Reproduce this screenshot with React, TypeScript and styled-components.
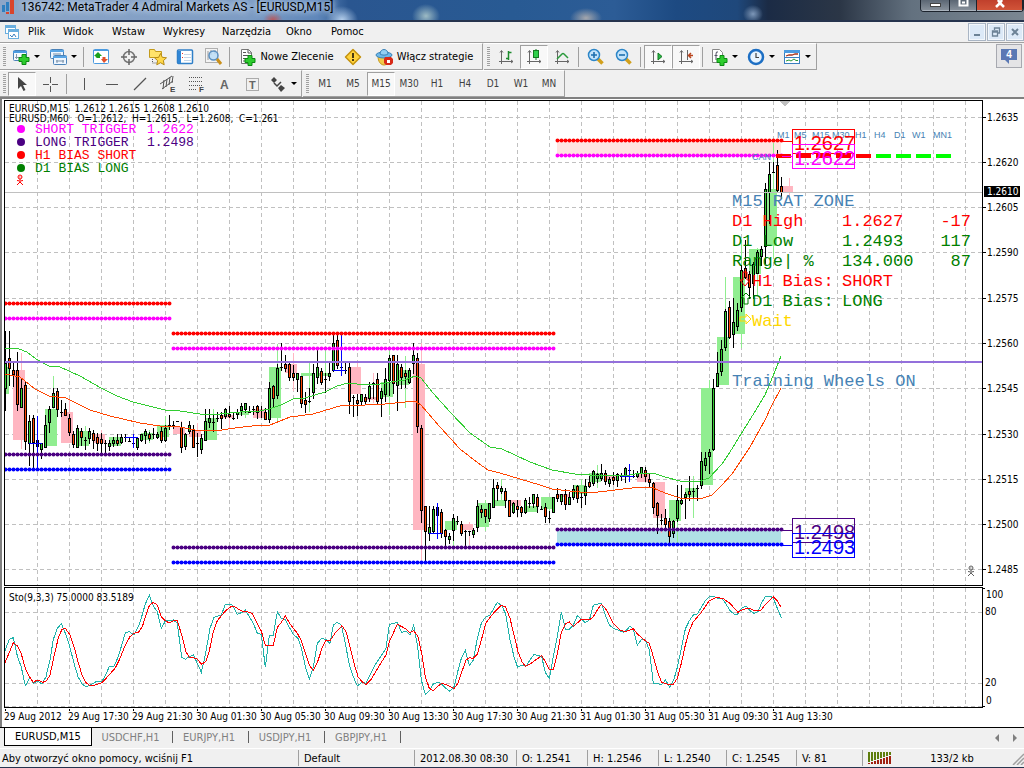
import React from "react";
import styled, { createGlobalStyle, css } from "styled-components";

const UI_FONT = '"DejaVu Sans Condensed", "Noto Sans", sans-serif';
const MONO = '"Liberation Mono", monospace';
const SANS = '"Liberation Sans", sans-serif';

const Global = createGlobalStyle`
  * { box-sizing: border-box; }
  body { margin: 0; background: #f0f0f0; font-family: ${UI_FONT}; font-size: 11px; color: #000; }
  button { font: inherit; color: inherit; padding: 0; margin: 0; background: none; border: 0; }
  svg { display: block; }
`;

/* ---------- window chrome ---------- */

const Window = styled.div`
  display: flex;
  flex-direction: column;
  min-height: 100vh;
  background: #f0f0f0;
`;

const TitleBar = styled.header`
  display: flex;
  justify-content: space-between;
  height: 22px;
  overflow: hidden;
  border-bottom: 2px solid #26344e;
  background:
    radial-gradient(ellipse 16px 14px at 342px 20px, #b5cfec, transparent),
    radial-gradient(ellipse 14px 12px at 426px 16px, #9dbbc4, transparent),
    radial-gradient(ellipse 16px 10px at 586px 18px, #a5a7ad, transparent),
    radial-gradient(ellipse 10px 8px at 273px 20px, #b8585c, transparent),
    radial-gradient(ellipse 10px 9px at 753px 14px, #7d97b8, transparent),
    linear-gradient(90deg, #8da6c8 0, #7d9cc4 24%, #5f87ba 31%, #2a5690 34%, #285a93 50%, #2c5c96 60%, #1d4a82 66%, #1f487b 72%, #1b2b45 75%, #2b3646 82%, #63717f 89%, #7b8792 100%);
`;

const Caption = styled.div`
  display: flex;
  gap: 5px;
  align-items: flex-start;
  padding-left: 1px;
  white-space: nowrap;
`;

const CaptionText = styled.h1`
  margin: 0;
  font-family: Roboto, "Noto Sans", sans-serif;
  font-size: 12px;
  font-weight: 400;
  line-height: 14px;
  text-shadow: 0 0 6px #dce8f6, 0 0 6px #b9cde6;
`;

const CaptionButtons = styled.div`
  display: flex;
  height: 12px;
  border: 1px solid #1c232d;
  border-top: 0;
  border-radius: 0 0 4px 4px;
  overflow: hidden;
`;

const CaptionButton = styled.button<{ $w: number; $close?: boolean }>`
  display: flex;
  justify-content: center;
  width: ${(p) => p.$w}px;
  border-right: 1px solid #1c232d;
  box-shadow: inset 0 -1px 0 #aab3bd;
  background: ${(p) => (p.$close ? "linear-gradient(#c0402c, #d3563a)" : "linear-gradient(#5b6673, #8a939d)")};
`;

const MenuBar = styled.nav`
  display: flex;
  align-items: center;
  height: 21px;
  padding-left: 4px;
  border-bottom: 1px solid #a0a0a0;
`;

const MenuItem = styled.button<{ $w: number }>`
  width: ${(p) => p.$w}px;
  text-align: left;
  font-size: 11px;
  line-height: 16px;
`;

const MdiButtons = styled.div`
  display: flex;
  gap: 1px;
  margin-left: auto;
`;

const MdiButton = styled.button`
  display: grid;
  place-items: center;
  width: 18px;
  height: 18px;
  border: 1px solid #a9b5c4;
  background: #dce9f7;
  box-shadow: inset 0 0 0 1px #f2f7fc;
`;

/* ---------- tool bars ---------- */

const Row = styled.div`
  display: flex;
  justify-content: space-between;
  height: 27px;
`;

const Groups = styled.div`
  display: flex;
  gap: 1px;
`;

const Group = styled.div`
  display: flex;
  align-items: center;
  padding: 0 1px 0 3px;
  border-top: 1px solid #fff;
  border-right: 1px solid #a0a0a0;
  border-bottom: 1px solid #a0a0a0;
`;

const Grip = styled.span`
  width: 3px;
  height: 19px;
  margin-right: 2px;
  background: repeating-linear-gradient(#a0a0a0 0 1px, #f0f0f0 1px 2px);
`;

const Divider = styled.span`
  width: 1px;
  height: 20px;
  margin: 0 3px 0 2px;
  background: #a0a0a0;
`;

const Tool = styled.button<{ $w?: number; $pressed?: boolean }>`
  display: flex;
  align-items: center;
  justify-content: center;
  gap: 4px;
  width: ${(p) => p.$w ?? 28}px;
  height: 24px;
  font-size: 11px;
  white-space: nowrap;
  ${(p) =>
    p.$pressed &&
    css`
      border: 1px solid #a0a0a0;
      border-right-color: #fff;
      border-bottom-color: #fff;
      background: #f8f8f8;
    `}
`;

const Period = styled(Tool)`
  color: #404040;
  font-size: 10px;
`;

const Drop = styled.span`
  border: 3px solid transparent;
  border-top-color: #000;
  border-bottom-width: 0;
`;

const ChatButton = styled.button`
  display: grid;
  place-items: center;
  width: 26px;
  height: 24px;
  margin: 1px 2px 0 0;
  border: 1px solid #a7a9b0;
  background: #e4e4e6;
`;

/* ---------- chart ---------- */

const ChartWindow = styled.main`
  display: grid;
  grid-template-columns: minmax(0, 1fr) 41px;
  row-gap: 1px;
  flex: 1;
  align-content: start;
  padding: 1px 0 0 2px;
  border-top: 2px solid #808080;
  border-left: 2px solid #808080;
  background: #fff;
`;

const Plot = styled.section<{ $h: number }>`
  height: ${(p) => p.$h}px;
  border: 1px solid #000;
`;

const Scale = styled.div<{ $h: number }>`
  height: ${(p) => p.$h}px;
`;

const Drawing = styled.svg`
  width: 100%;
  height: 100%;
  overflow: hidden;
  shape-rendering: crispEdges;
`;

const Label = styled.text<{ $size?: number; $font?: string }>`
  font-family: ${(p) => p.$font ?? UI_FONT};
  font-size: ${(p) => p.$size ?? 10}px;
  white-space: pre;
`;

const TimeAxis = styled.div`
  grid-column: 1 / -1;
  height: 18px;
`;

/* ---------- tabs and status ---------- */

const Tabs = styled.nav`
  display: flex;
  height: 21px;
  padding-left: 4px;
  border-top: 1px solid #000;
`;

const Tab = styled.button<{ $w: number; $active?: boolean }>`
  width: ${(p) => p.$w}px;
  height: 18px;
  color: #808080;
  position: relative;
  ${(p) =>
    p.$active
      ? css`
          color: #000;
          background: #fff;
          border: 1px solid #000;
          border-top: 0;
        `
      : css`
          padding-right: 4px;
          &::after {
            content: "";
            position: absolute;
            right: 0;
            top: 3px;
            height: 12px;
            border-right: 1px solid #606060;
          }
        `}
`;

const TabArrows = styled.div`
  display: flex;
  gap: 6px;
  margin: 4px 4px 0 auto;
`;

const ArrowButton = styled.button`
  width: 11px;
  height: 11px;
`;

const Status = styled.footer`
  display: flex;
  align-items: center;
  height: 20px;
  border-top: 1px solid #fff;
  border-bottom: 1px solid #26344e;
`;

const Cell = styled.span<{ $w?: number }>`
  flex: ${(p) => (p.$w ? `0 0 ${p.$w}px` : "1 1 auto")};
  display: flex;
  align-items: center;
  height: 16px;
  padding-left: 5px;
  border-left: 1px solid #a0a0a0;
  white-space: nowrap;
  &:first-child { border-left: 0; padding-left: 2px; }
`;

const Traffic = styled.span`
  flex: 1;
  text-align: center;
`;

/* ---------- icons ---------- */

const Icon = ({ children, s = 18 }: { children: React.ReactNode; s?: number }) => (
  <svg width={s} height={s} viewBox={`0 0 ${s} ${s}`} aria-hidden="true">{children}</svg>
);

const Plus = ({ x, y }: { x: number; y: number }) => (
  <path d={`M${x + 3} ${y}h4v3h3v4h-3v3h-4v-3h-3v-4h3z`} fill="#2ecc2e" stroke="#0b8a12" />
);

const icons = {
  newChart: (
    <Icon><rect x="1.500" y="2.500" width="13" height="10" rx="1" fill="#f4f9ff" stroke="#4b82b8" /><path d="M1 3h14v2H1z" fill="#4b9be0" /><path d="M4.500 6v5M3 9.500h5M10 7h3" stroke="#8896a8" fill="none" /><Plus x={7} y={6.500} /></Icon>
  ),
  profiles: (
    <Icon><rect x="1.500" y="1.500" width="13" height="9" rx="1" fill="#eef6ff" stroke="#4b82b8" /><path d="M1 2h14v2H1z" fill="#5aa6e6" /><rect x="4.500" y="7.500" width="13" height="9" rx="1" fill="#eef6ff" stroke="#4b82b8" /><path d="M4 8h14v2H4z" fill="#5aa6e6" /><path d="M7 13h8M8 12v3M14 12v3M4 6h8" stroke="#7890a8" fill="none" /></Icon>
  ),
  market: (
    <Icon><rect x="1.500" y="1.500" width="15" height="14" rx="1" fill="#fff" stroke="#4b9be0" /><path d="M1 2h16v1H1z" fill="#4b9be0" /><path d="M3.500 9V8H2L6 4l4 4H8v2H5z" fill="#1aa01a" /><path d="M9 11h1.500V9h3v2H16l-4 4z" fill="#e2502a" /></Icon>
  ),
  crosshair: (
    <Icon><circle cx="9" cy="9" r="5.500" fill="none" stroke="#777" strokeWidth="1.500" /><path d="M9 1v6M9 11v6M1 9h6M11 9h6" stroke="#666" strokeWidth="1.500" /></Icon>
  ),
  star: (
    <Icon s={19}><path d="M1.500 2.500h5l1 2h6v6h-12z" fill="#ffe36b" stroke="#c39b1c" /><path d="M4.500 12v4h5" stroke="#555" strokeDasharray="1 1" fill="none" /><path d="M12.500 6.500l1.800 3.800 4.200.5-3.100 2.800.8 4.200-3.700-2.100-3.700 2.100.8-4.200-3.100-2.800 4.200-.5z" fill="#ffd84a" stroke="#b58a14" /></Icon>
  ),
  navigator: (
    <Icon><rect x="1.500" y="2" width="15" height="13.500" rx="1" fill="#fff" stroke="#2f7fc8" strokeWidth="1.500" /><path d="M2 3h3v12H2z" fill="#2f86d6" /><path d="M8 6.500h7M8 9.500h7M8 12.500h7" stroke="#c4d6e8" /><path d="M6 5h1v1H6zM6 9h1v1H6z" fill="#d33" /></Icon>
  ),
  tester: (
    <Icon s={19}><rect x="1.500" y="1.500" width="12" height="14" fill="#f4f4f4" stroke="#b0b0b0" /><path d="M4 4v9M7 3v5M11 3v4" stroke="#9a9a9a" /><circle cx="9.500" cy="8.500" r="4.500" fill="#b8dcf8" fillOpacity=".8" stroke="#5a8fc0" strokeWidth="1.500" /><path d="M13 12l4 5" stroke="#c98f1a" strokeWidth="3" /></Icon>
  ),
  order: (
    <Icon><path d="M3.500 1.500h7l3 3v11h-10z" fill="#fff" stroke="#777" /><path d="M10 1.500V5h3.500M5 4.500h3M5 7.500h6M5 10.500h3M5 13h3" stroke="#555" fill="none" /><Plus x={7} y={7.500} /></Icon>
  ),
  alert: (
    <Icon><path d="M9 1.500L16.500 9 9 16.500 1.500 9z" fill="#ffd23c" stroke="#c4920e" strokeLinejoin="round" strokeWidth="1.500" /><path d="M8 5h2v5H8zM8 11h2v2H8z" fill="#4a3a10" /></Icon>
  ),
  expert: (
    <Icon><path d="M3 8c0 6 3 9 6 9s6-3 6-9z" fill="#f2c94a" stroke="#c49a20" /><ellipse cx="9" cy="7" rx="8" ry="3" fill="#6db9ea" stroke="#3a82b8" /><path d="M5 6c0-6 8-6 8 0-2 1.500-6 1.500-8 0z" fill="#93d0f4" stroke="#3a82b8" /><path d="M10 9h6l2 2v4l-2 2h-5l-2-2v-4z" fill="#d82a18" /><path d="M12 12h3v3h-3z" fill="#fff" /></Icon>
  ),
  bars: (
    <Icon><path d="M4.500 3v13M2 13.500h14M3 4.500l1.500-2L6 4.500M14 12l2 1.500-2 1.500" stroke="#666" fill="none" /><path d="M11.500 3v9M11.500 4.500h3M9 10.500h2.500" stroke="#1c8a2c" strokeWidth="1.500" fill="none" /></Icon>
  ),
  candle: (
    <Icon><path d="M4.500 3v13M2 13.500h14M3 4.500l1.500-2L6 4.500M14 12l2 1.500-2 1.500" stroke="#666" fill="none" /><path d="M11 1v11" stroke="#137a20" /><rect x="8.500" y="2.500" width="5" height="7" fill="#2ed04a" stroke="#137a20" /></Icon>
  ),
  line: (
    <Icon><path d="M4.500 3v13M2 13.500h14M3 4.500l1.500-2L6 4.500M14 12l2 1.500-2 1.500" stroke="#666" fill="none" /><path d="M4 11l5-5q1-1 2 0l4 4" stroke="#2a9a3c" strokeWidth="1.500" fill="none" /></Icon>
  ),
  zoomIn: (
    <Icon><path d="M10.500 10.500l5 5" stroke="#d2a01c" strokeWidth="3.500" /><circle cx="7" cy="7" r="5.500" fill="#c4e4fa" stroke="#2c86c8" strokeWidth="1.500" /><path d="M7 4v6M4 7h6" stroke="#1d6fae" strokeWidth="1.600" /></Icon>
  ),
  zoomOut: (
    <Icon><path d="M10.500 10.500l5 5" stroke="#d2a01c" strokeWidth="3.500" /><circle cx="7" cy="7" r="5.500" fill="#c4e4fa" stroke="#2c86c8" strokeWidth="1.500" /><path d="M4 7h6" stroke="#1d6fae" strokeWidth="1.600" /></Icon>
  ),
  scroll: (
    <Icon><path d="M4.500 3v13M2 13.500h14M3 4.500l1.500-2L6 4.500M14 12l2 1.500-2 1.500" stroke="#666" fill="none" /><path d="M9 5l4 3.500L9 12z" fill="#2ab84a" stroke="#137a20" /></Icon>
  ),
  shift: (
    <Icon><path d="M4.500 3v13M2 13.500h14M3 4.500l1.500-2L6 4.500M14 12l2 1.500-2 1.500M10.500 2v10" stroke="#666" fill="none" /><path d="M16 7.500h-4M14 5l-2.500 2.500L14 10" stroke="#b8431c" strokeWidth="1.500" fill="none" /></Icon>
  ),
  indicators: (
    <Icon><path d="M2.500 1.500h7l3 3v10h-10z" fill="#fff" stroke="#888" /><path d="M8 4q-2-1-2 2v6M4.500 7.500h3" stroke="#556" fill="none" /><Plus x={7} y={7.500} /></Icon>
  ),
  clock: (
    <Icon><circle cx="9" cy="9" r="7" fill="#e8f4ff" stroke="#1d6fc4" strokeWidth="2.500" /><path d="M9 5v4.500h3" stroke="#444" fill="none" strokeWidth="1.200" /></Icon>
  ),
  template: (
    <Icon><rect x="1.500" y="2.500" width="15" height="13" fill="#fff" stroke="#3a7fc0" /><path d="M1 2h16v3H1z" fill="#4b9be0" /><path d="M3 8l3-1h3l3-1h3" stroke="#a8331c" strokeWidth="1.300" fill="none" /><path d="M3 13l3-1 2 1 3-2 2 1.500h2" stroke="#2a9a3c" fill="none" /><path d="M2 9.500h14" stroke="#3a7fc0" /></Icon>
  ),
  pointer: (<Icon><path d="M5 2v12l3-3 2.500 5 2-1-2.500-5h4z" fill="#444" /></Icon>),
  cross: (<Icon><path d="M9.500 2v6M9.500 11v6M2 9.500h6M11 9.500h6" stroke="#555" /></Icon>),
  vline: (<Icon><path d="M9.500 3v12" stroke="#555" /></Icon>),
  hline: (<Icon><path d="M3 9.500h12" stroke="#555" /></Icon>),
  trend: (<Icon><path d="M3 15L15 3" stroke="#555" strokeWidth="1.200" /></Icon>),
  channel: (
    <Icon><path d="M1 9L13 1M3 14L14 6M5 5l-1 9M8 4L7 12M11 2l-1 8M14 1l-1 7" stroke="#555" fill="none" /><text x="11" y="17" fontFamily="Liberation Sans" fontWeight="700" fontSize="8" fill="#444">E</text></Icon>
  ),
  fibo: (
    <Icon><path d="M2 2.500h14M2 6.500h14M2 10.500h14M2 14.500h8" stroke="#555" strokeDasharray="1 1" /><text x="12" y="17" fontFamily="Liberation Sans" fontWeight="700" fontSize="8" fill="#444">F</text></Icon>
  ),
  text: (<Icon><text x="5" y="14" fontFamily="Liberation Sans" fontWeight="700" fontSize="12" fill="#666">A</text></Icon>),
  label: (
    <Icon><rect x="3.500" y="3.500" width="12" height="12" fill="none" stroke="#666" strokeDasharray="1 1" /><text x="6" y="14" fontFamily="Liberation Sans" fontWeight="700" fontSize="11" fill="#666">T</text></Icon>
  ),
  arrows: (
    <Icon><path d="M5 2l3 3-3 3-3-3zM12 10l4 3-4 4-3-4z" fill="#444" /><path d="M5 8l3 3 4-4" fill="none" stroke="#444" strokeWidth="1.500" /></Icon>
  ),
};

/* ---------- chart data (canvas coordinates) ---------- */

// Candles four pixels apart from x = 5: high, low, body top, body bottom, direction.
const CANDLES = `331 410 363 388 G|331 385 358 368 R|362 386 370 374 R|352 410 370 404 R|378 407 388 407 G|382 449 385 441 R|415 465 421 443 G|415 468 418 442 R|440 446 440 446 R|443 458 443 449 G|415 447 425 447 G|406 432 409 422 G|388 407 393 407 G|388 416 391 409 R|400 416 412 412 G|403 415 409 415 R|414 435 418 432 R|431 447 434 444 R|425 447 428 447 G|428 445 431 437 R|437 449 440 440 G|428 443 431 438 G|430 448 433 440 R|433 450 437 443 R|433 453 439 443 R|440 455 443 443 G|440 450 443 446 G|437 446 440 443 G|434 445 440 443 R|434 443 437 442 G|434 441 437 437 G|438 441 441 441 G|443 443 443 443 G|437 449 438 447 G|434 441 434 440 G|429 443 431 435 G|432 440 434 438 R|428 438 434 434 G|432 438 434 437 G|427 442 431 440 R|425 441 428 440 G|415 429 425 425 G|421 428 425 425 G|421 421 421 421 G|422 452 427 447 R|433 449 434 446 G|421 433 425 431 G|425 447 430 447 R|433 456 443 443 G|434 453 438 449 G|409 440 421 440 G|409 427 418 422 G|414 431 422 422 G|412 421 418 418 G|412 428 415 418 R|408 418 409 416 G|406 417 414 416 R|412 419 418 418 G|409 418 412 414 G|403 415 406 410 G|403 412 403 409 G|406 412 412 412 G|406 414 409 409 G|405 418 406 412 R|406 417 410 410 R|408 419 412 419 R|382 422 388 419 G|385 407 386 398 R|364 398 368 395 G|343 370 367 367 G|355 371 364 368 R|362 380 364 377 R|365 380 373 377 R|373 391 373 379 G|376 407 376 403 R|392 412 400 404 R|388 402 401 401 G|364 398 373 392 G|350 383 367 377 G|368 384 371 382 R|373 392 379 379 G|362 380 373 376 G|335 371 343 370 G|335 368 340 365 R|367 367 367 367 G|363 373 370 370 G|363 413 367 401 R|395 416 397 397 G|394 415 400 403 R|394 405 394 401 G|394 403 397 401 R|382 401 386 398 G|382 398 383 383 G|373 403 379 401 R|388 416 391 398 G|368 401 379 394 G|355 395 358 380 G|355 393 355 383 R|355 410 364 385 G|364 388 367 377 R|370 387 373 376 R|368 383 370 382 G|343 373 355 363 G|353 432 358 426 R|425 522 428 510 R|506 561 506 531 R|506 540 527 533 G|506 533 509 531 G|507 515 507 515 R|509 537 512 533 R|529 547 530 536 R|533 543 536 539 G|514 540 518 530 G|516 524 521 521 G|521 535 524 533 R|530 547 531 531 G|531 535 531 531 G|528 537 530 534 G|500 531 506 527 G|505 517 509 512 R|509 522 509 516 R|503 521 503 518 G|479 507 488 507 G|482 500 485 488 R|486 493 488 491 G|488 507 491 500 R|500 516 500 516 R|502 513 503 512 G|500 516 506 509 R|506 516 507 512 R|498 513 500 512 G|497 507 503 503 G|494 507 494 503 G|494 512 497 506 R|506 509 509 509 G|503 522 507 516 R|511 522 518 518 G|497 512 497 512 G|488 501 494 498 R|494 504 494 501 G|489 509 494 504 R|492 504 497 504 G|485 499 489 497 G|485 502 486 498 R|493 507 497 497 G|479 504 486 495 G|476 487 482 486 R|470 485 471 483 G|473 482 474 478 G|464 480 473 478 G|470 484 473 481 R|477 486 479 483 G|472 484 477 480 R|473 486 474 480 G|473 480 476 476 G|467 482 468 476 G|470 470 470 470 G|470 477 476 476 G|471 477 473 476 G|467 477 467 473 G|467 481 470 476 R|474 486 479 482 R|482 513 483 507 R|502 533 503 515 R|514 524 520 520 G|509 529 518 524 R|518 543 521 536 R|520 537 521 533 G|485 521 500 518 G|485 504 500 503 G|492 518 494 497 G|476 500 491 494 R|488 497 491 491 G|485 500 488 488 G|452 488 461 485 G|452 470 458 465 G|449 473 452 456 G|379 450 388 449 G|352 386 373 386 G|340 375 349 371 G|309 350 311 347 G|301 338 307 337 R|298 347 322 334 G|303 330 310 326 G|265 311 270 307 G|240 278 268 277 R|271 298 274 287 R|262 298 264 283 G|250 273 252 273 G|246 265 249 256 G|183 263 189 246 G|162 223 174 192 G|162 172 172 172 G|150 192 165 190 R|177 198 186 192 R`
  .split("|")
  .map((row, i) => {
    const [high, low, top, bottom, dir] = row.split(" ");
    return { x: 5 + i * 4, high: +high, low: +low, top: +top, bottom: +bottom, up: dir === "G" };
  });

// Hourly candles drawn behind: left, body top, body bottom, high, low, direction.
const HOURS: [number, number, number, number, number, "G" | "R" | "B"][] = [
  [-3, 367, 394, 367, 394, "G"], [13, 370, 440, 353, 449, "R"], [29, 443, 443, 416, 470, "B"], [45, 409, 446, 376, 446, "G"],
  [61, 412, 443, 400, 443, "R"], [77, 431, 446, 426, 448, "G"], [93, 434, 443, 430, 453, "R"], [109, 437, 446, 434, 446, "G"],
  [125, 437, 437, 434, 448, "B"], [141, 433, 440, 430, 443, "G"], [157, 425, 437, 416, 440, "G"], [173, 427, 434, 421, 452, "R"],
  [189, 431, 437, 423, 453, "R"], [205, 418, 440, 409, 440, "G"], [221, 415, 418, 406, 428, "R"], [237, 412, 415, 403, 418, "G"],
  [253, 409, 418, 406, 418, "R"], [269, 367, 418, 344, 421, "G"], [285, 364, 373, 353, 391, "R"], [301, 373, 376, 363, 412, "G"],
  [317, 373, 376, 348, 392, "G"], [333, 370, 370, 335, 376, "B"], [349, 367, 394, 363, 415, "R"], [365, 397, 400, 373, 403, "R"],
  [381, 382, 397, 350, 415, "G"], [397, 370, 385, 356, 408, "G"], [413, 364, 530, 343, 563, "R"], [429, 533, 533, 503, 539, "B"],
  [445, 521, 530, 516, 547, "G"], [461, 524, 530, 522, 545, "R"], [477, 503, 527, 500, 531, "G"], [493, 500, 506, 479, 506, "G"],
  [509, 500, 506, 500, 515, "R"], [525, 506, 512, 497, 512, "G"], [541, 497, 509, 497, 521, "G"], [557, 494, 497, 489, 508, "R"],
  [573, 485, 494, 479, 506, "G"], [589, 473, 482, 465, 488, "G"], [605, 476, 479, 472, 486, "R"], [621, 476, 476, 464, 482, "B"],
  [637, 473, 482, 467, 482, "R"], [653, 482, 518, 482, 533, "R"], [669, 500, 521, 486, 545, "G"], [685, 488, 497, 476, 518, "G"],
  [701, 388, 485, 380, 485, "G"], [717, 337, 385, 277, 385, "G"], [733, 277, 334, 240, 348, "G"], [749, 249, 274, 248, 296, "G"],
  [765, 189, 246, 143, 258, "G"], [781, 186, 192, 178, 198, "R"],
];

const FAST_MA =
  "5,348 19,349 27,352 36,359 49,366 60,367 80,376 101,388 117,396 133,402 149,406 165,410 180,411 200,414 220,414 240,412 260,411 269,409 281,405 293,399 305,398 325,392 337,386 348,383 365,385 380,384 397,381 405,380 415,376 421,378 433,393 450,412 470,433 490,447 502,449 515,455 530,462 552,470 575,474 590,475 630,475 640,473 653,473 665,477 680,481 700,481 709,478 722,464 730,452 741,434 751,418 765,395 773,376 781,356";
const SLOW_MA =
  "5,374 20,377 35,389 49,396 66,398 90,410 110,416 140,423 160,426 180,427 195,430 215,431 235,428 260,425 270,425 290,417 313,414 343,405 365,405 385,404 405,402 415,401 421,405 440,427 460,449 478,463 488,470 500,473 520,479 540,485 552,489 570,491 590,493 615,490 640,487 653,488 665,493 680,498 700,499 712,495 722,485 732,474 750,447 765,420 772,405 781,388";

// Oscillator samples, three units to the pixel.
const STO_MAIN =
  "15,212 28,178 40,173 52,228 64,262 76,317 90,292 100,310 112,303 126,312 138,290 150,240 160,178 172,145 184,131 196,160 208,195 222,250 234,290 246,312 258,320 272,315 290,304 305,306 318,282 328,260 342,258 355,230 376,158 388,155 402,165 415,140 425,110 436,72 448,46 460,78 472,95 484,145 496,123 520,120 532,130 545,232 556,238 568,230 580,224 592,250 604,277 616,225 630,145 642,112 664,105 676,73 696,74 712,103 726,97 736,90 748,110 760,130 772,160 784,163 796,262 808,165 820,165 832,95 844,115 856,118 868,142 880,163 894,175 904,203 916,260 928,298 940,262 952,190 964,176 978,178 990,190 1000,135 1012,127 1024,135 1036,190 1048,255 1060,290 1072,318 1086,307 1098,310 1110,285 1125,255 1150,218 1158,205 1168,133 1192,127 1205,158 1218,153 1230,165 1241,136 1253,200 1264,300 1276,343 1288,333 1300,312 1315,306 1325,312 1338,325 1350,334 1362,320 1374,272 1384,235 1396,212 1408,256 1420,240 1432,175 1444,130 1456,112 1470,105 1492,67 1506,78 1517,102 1530,180 1542,230 1553,262 1566,255 1580,256 1590,240 1602,223 1625,230 1636,278 1648,295 1660,230 1672,170 1684,95 1696,147 1708,147 1720,135 1732,107 1744,118 1756,128 1768,120 1780,76 1790,73 1804,70 1816,105 1828,135 1840,145 1855,150 1870,157 1880,150 1890,138 1900,147 1912,195 1925,178 1936,180 1948,210 1960,310 1985,313 1997,300 2009,322 2022,297 2032,262 2044,205 2056,147 2068,122 2080,105 2092,102 2104,82 2116,62 2128,50 2140,48 2154,55 2166,55 2178,72 2190,92 2202,102 2212,104 2224,85 2238,78 2250,92 2262,100 2274,95 2284,70 2296,50 2310,48 2320,55 2330,80 2344,113";
const STO_SIGNAL =
  "15,248 40,188 52,198 64,222 76,265 88,290 100,307 112,300 128,307 140,302 150,285 164,220 176,170 186,148 196,145 210,165 222,200 234,245 246,285 258,308 270,317 284,315 305,308 318,295 345,265 358,240 376,195 390,170 402,160 415,157 427,140 438,105 448,77 460,67 472,75 484,110 496,122 508,129 520,122 532,122 545,165 558,215 568,232 590,235 605,253 618,243 628,212 640,155 652,122 676,93 696,78 708,82 722,92 748,97 758,102 772,132 784,153 796,196 820,196 832,142 844,127 856,108 870,132 892,160 904,182 916,220 928,255 940,272 952,248 966,205 978,180 990,182 1005,160 1026,137 1038,155 1050,200 1062,250 1074,290 1086,305 1098,314 1112,300 1136,260 1158,225 1168,185 1192,133 1215,145 1230,158 1241,152 1254,170 1266,225 1276,290 1288,325 1300,332 1312,320 1325,310 1340,315 1362,326 1374,310 1384,280 1398,240 1408,233 1420,235 1432,222 1444,180 1458,128 1480,100 1504,76 1516,80 1530,115 1554,215 1566,245 1576,259 1590,252 1604,242 1625,227 1636,245 1648,268 1660,268 1672,220 1684,158 1696,132 1708,126 1720,140 1744,118 1768,120 1780,110 1792,90 1804,73 1818,88 1840,130 1860,150 1875,155 1890,150 1900,146 1912,162 1936,182 1948,190 1960,230 1974,280 1985,307 2000,312 2020,313 2032,295 2044,250 2056,195 2068,152 2080,125 2104,97 2128,62 2148,52 2170,56 2190,70 2214,97 2230,88 2248,84 2265,93 2282,92 2295,75 2320,50 2332,62 2342,80";

const thirds = (points: string) =>
  points
    .split(" ")
    .map((p) => {
      const [x, y] = p.split(",").map(Number);
      return `${x / 3},${580 + y / 3}`;
    })
    .join(" ");

const PRICES = ["1.2635", "1.2620", "1.2605", "1.2590", "1.2575", "1.2560", "1.2545", "1.2530", "1.2515", "1.2500", "1.2485"];
const PRICE_Y = [117, 162, 207, 252, 298, 343, 388, 434, 479, 524, 569];
const TIMES = ["29 Aug 2012", "29 Aug 17:30", "29 Aug 21:30", "30 Aug 01:30", "30 Aug 05:30", "30 Aug 09:30", "30 Aug 13:30", "30 Aug 17:30", "30 Aug 21:30", "31 Aug 01:30", "31 Aug 05:30", "31 Aug 09:30", "31 Aug 13:30"];

const LEVELS: [number, number, number, string][] = [
  [5, 171, 303, "#ff0000"], [5, 171, 318, "#ff00ff"], [5, 171, 454, "#4b0082"], [5, 171, 469, "#0000ff"],
  [173, 554, 333, "#ff0000"], [173, 554, 348, "#ff00ff"], [173, 554, 547, "#4b0082"], [173, 554, 562, "#0000ff"],
  [557, 782, 140, "#ff0000"], [557, 782, 155, "#ff00ff"], [557, 782, 529, "#4b0082"], [557, 782, 544, "#0000ff"],
];

const TAGS: [number, string, string][] = [
  [129, "1.2627", "#ff0000"], [144, "1.2622", "#ff00ff"], [518, "1.2498", "#4b0082"], [533, "1.2493", "#0000ff"],
];

const FRAMES: [string, number, number][] = [
  ["M1", 777, 776], ["M5", 794, 796], ["M15", 812, 816], ["M30", 832, 836], ["H1", 855, 856], ["H4", 874, 876], ["D1", 894, 896], ["W1", 912, 916], ["MN1", 933, 936],
];

const PANEL: [number, number, string, string][] = [
  [732, 206, "#4682b4", "M15 RAT ZONE"],
  [732, 226, "#ff0000", "D1 High"], [842, 226, "#ff0000", "1.2627"],
  [732, 246, "#008000", "D1 Low"], [842, 246, "#008000", "1.2493"],
  [732, 266, "#008000", "Range| %"], [842, 266, "#008000", "134.000"],
  [752, 286, "#ff0000", "H1 Bias:"], [842, 286, "#ff0000", "SHORT"],
  [752, 306, "#008000", "D1 Bias:"], [842, 306, "#008000", "LONG"],
  [752, 326, "#ffd700", "Wait"],
  [732, 386, "#4682b4", "Training Wheels ON"],
];

const LEGEND: [number, string, string, string][] = [
  [129, "#ff00ff", "SHORT TRIGGER", "1.2622"],
  [142, "#4b0082", "LONG TRIGGER", "1.2498"],
  [155, "#ff0000", "H1 BIAS SHORT", ""],
  [168, "#008000", "D1 BIAS LONG", ""],
];

const Columns = ({ top, bottom }: { top: number; bottom: number }) => (
  <g stroke="#c0c0c0" strokeDasharray="4 3">
    {Array.from({ length: 60 }, (_, i) => (
      <path key={i} d={`M${37.5 + i * 32} ${top}V${bottom}`} />
    ))}
  </g>
);

const Skull = ({ x, y, color }: { x: number; y: number; color: string }) => (
  <g transform={`translate(${x} ${y})`} shapeRendering="auto" stroke={color} fill="none">
    <circle cx="4" cy="3" r="2" />
    <path d="M3 3h.8M4.600 3h.8M4 5v1M1 6.500q3 1 6 0M4 7v1M1 11l3-3 3 3" />
  </g>
);

const PriceChart = () => (
  <Drawing role="img" aria-label="EURUSD M15 price chart">
    <g transform="translate(-5 -101)">
      <Columns top={101} bottom={590} />
      <g stroke="#c0c0c0" strokeDasharray="4 3">
        {PRICE_Y.map((y) => <path key={y} d={`M5 ${y + 0.5}H3000`} />)}
      </g>
      <path d="M779 101h12l-6 5z" fill="#c0c0c0" />
      <rect x="557" y="141" width="224" height="15" fill="#ffe4e1" />
      <rect x="557" y="530" width="224" height="14" fill="#b0e0e6" />
      {HOURS.map(([x, top, bottom, high, low, dir]) =>
        dir === "B" ? null : (
          <g key={x} fill={dir === "G" ? "#90ee90" : "#ffb6c1"}>
            <rect x={x + 8} y={high} width="1" height={low - high} />
            <rect x={x} y={top} width="12" height={bottom - top} />
          </g>
        ),
      )}
      {CANDLES.map((c) => (
        <g key={c.x}>
          <rect x={c.x} y={c.high} width="1" height={c.low - c.high + 1} />
          <rect x={c.x - 1} y={c.top} width="3" height={c.bottom - c.top + 1} />
          {c.bottom - c.top > 1 && (
            <rect x={c.x} y={c.top + 1} width="1" height={c.bottom - c.top - 1} fill={c.up ? "#32cd32" : "#ff4500"} />
          )}
        </g>
      ))}
      {HOURS.filter((h) => h[5] === "B").map(([x, y, , high, low]) => (
        <path key={x} d={`M${x} ${y + 0.5}h13M${x + 8.5} ${high}V${low}`} stroke="#0000ff" />
      ))}
      <path d="M5 192.500H3000" stroke="#c0c0c0" />
      <polyline points={FAST_MA} fill="none" stroke="#32cd32" />
      <polyline points={SLOW_MA} fill="none" stroke="#ff4500" />
      <path d="M5 362H3000" stroke="#9370db" strokeWidth="2" />
      {LEVELS.map(([x1, x2, y, color]) => (
        <g key={`${x1}-${y}`} stroke={color} shapeRendering="auto">
          <path d={`M${x1} ${y + 0.5}H${x2}`} />
          <path d={`M${x1 + 0.5} ${y + 0.5}H${x2}`} strokeWidth="4" strokeLinecap="round" strokeDasharray="0 4" />
        </g>
      ))}
      {FRAMES.map(([name, tx, bx], i) => (
        <g key={name}>
          <Label x={tx} y={138} fill="#4682b4" $size={9} $font={SANS}>{name}</Label>
          <rect x={bx} y={154} width="15" height="4" fill={i < 5 ? "#ff0000" : "#00ff00"} />
        </g>
      ))}
      <Label x={752} y={160} fill="#4682b4" $size={9} $font={SANS}>CAN</Label>
      {TAGS.map(([y, value, color]) => (
        <g key={value}>
          <rect x="792.5" y={y + 0.5} width="62" height="24" fill="none" stroke={color} />
          <path d={`M782 ${y + 12.5}h10`} stroke={color} />
          <Label x={794} y={y + 21} fill={color} $size={20} $font={SANS}>{value}</Label>
        </g>
      ))}
      {PANEL.map(([x, y, color, text]) => (
        <Label key={`${x}-${y}`} x={x} y={y} fill={color} $size={17} $font={MONO}>{text}</Label>
      ))}
      <Label x={971} y={226} fill="#ff0000" textAnchor="end" $size={17} $font={MONO}>-17</Label>
      <Label x={971} y={246} fill="#008000" textAnchor="end" $size={17} $font={MONO}>117</Label>
      <Label x={971} y={266} fill="#008000" textAnchor="end" $size={17} $font={MONO}>87</Label>
      <g fill="none" shapeRendering="auto">
        <path d="M743 272h4v8h3l-5 6-5-6h3z" stroke="#ff0000" />
        <path d="M744 304v-6h-3l5-5 5 5h-3v6z" stroke="#008000" />
        <path d="M740 317h6v-3l5 5-5 5v-3h-6z" stroke="#ffd700" />
      </g>
      <Label x={9} y={112}>EURUSD,M15  1.2612 1.2615 1.2608 1.2610</Label>
      <Label x={9} y={122}>EURUSD,M60   O=1.2612,  H=1.2615,  L=1.2608,  C=1.261</Label>
      {LEGEND.map(([y, color, name, value]) => (
        <g key={name} fill={color}>
          <circle cx="21" cy={y} r="4" shapeRendering="auto" />
          <Label x={35} y={y + 4} $size={13} $font={MONO}>{name}</Label>
          <Label x={147} y={y + 4} $size={13} $font={MONO}>{value}</Label>
        </g>
      ))}
      <Skull x={16} y={174} color="#ff0000" />
      <Skull x={967} y={565} color="#606060" />
    </g>
  </Drawing>
);

const PriceAxis = () => (
  <Drawing role="img" aria-label="Price scale">
    <g transform="translate(-983 -100)">
      {PRICE_Y.map((y, i) => (
        <g key={y}>
          <path d={`M983 ${y + 0.5}h3`} stroke="#000" />
          <Label x={987} y={y + 4}>{PRICES[i]}</Label>
        </g>
      ))}
      <rect x="984" y="186" width="36" height="11" />
      <Label x={987} y={195} fill="#fff">1.2610</Label>
    </g>
  </Drawing>
);

const Oscillator = () => (
  <Drawing role="img" aria-label="Stochastic oscillator">
    <g transform="translate(-5 -588)">
      <Columns top={588} bottom={710} />
      <path d="M5 612.500H3000M5 683.500H3000M5 706.500H3000" stroke="#c0c0c0" strokeDasharray="4 3" />
      <polyline points={thirds(STO_MAIN)} fill="none" stroke="#20b2aa" />
      <polyline points={thirds(STO_SIGNAL)} fill="none" stroke="#ff0000" />
      <Label x={9} y={601}>Sto(9,3,3) 75.0000 83.5189</Label>
    </g>
  </Drawing>
);

const OscillatorAxis = () => (
  <Drawing role="img" aria-label="Oscillator scale">
    <g transform="translate(-983 -587)">
      <Label x={986} y={598}>100</Label>
      <Label x={985} y={615}>80</Label>
      <Label x={985} y={686}>20</Label>
      <Label x={986} y={704}>0</Label>
      <path d="M983 588.500h2M983 706.500h2" stroke="#000" />
    </g>
  </Drawing>
);

const MENU: [string, number][] = [["Plik", 35], ["Widok", 49], ["Wstaw", 51], ["Wykresy", 59], ["Narzędzia", 64], ["Okno", 45], ["Pomoc", 45]];
const PERIODS = ["M1", "M5", "M15", "M30", "H1", "H4", "D1", "W1", "MN"];
const TABS: [string, number][] = [["USDCHF,H1", 81], ["EURJPY,H1", 76], ["USDJPY,H1", 76], ["GBPJPY,H1", 76]];
const STATUS: [string, number][] = [["Default", 116], ["2012.08.30 08:30", 102], ["O: 1.2541", 71], ["H: 1.2546", 71], ["L: 1.2540", 68], ["C: 1.2545", 70], ["V: 81", 66]];

export default function App() {
  return (
    <>
      <Global />
      <Window>
        <TitleBar>
          <Caption>
            <svg width="15" height="18" aria-hidden="true">
              <path d="M1 5h3v7H1zM5 2h3v9H5z" fill="#2f7fc0" />
              <path d="M9 0h4v14H9z" fill="#d9442c" />
              <path d="M5 12h3v2H5z" fill="#d9442c" />
            </svg>
            <CaptionText>136742: MetaTrader 4 Admiral Markets AS - [EURUSD,M15]</CaptionText>
          </Caption>
          <CaptionButtons>
            <CaptionButton $w={29} aria-label="Minimize"><svg width="11" height="7"><rect x=".5" y="3.500" width="10" height="3" fill="#fff" stroke="#444" /></svg></CaptionButton>
            <CaptionButton $w={27} aria-label="Restore"><svg width="11" height="7"><path d="M1.500 0v5.500h8V0M4 2.500h3" stroke="#fff" strokeWidth="2" fill="none" /></svg></CaptionButton>
            <CaptionButton $w={46} $close aria-label="Close"><svg width="12" height="8"><path d="M2 7l4-4 4 4M4 0l2 3 2-3" stroke="#fff" strokeWidth="2.500" fill="none" /></svg></CaptionButton>
          </CaptionButtons>
        </TitleBar>

        <MenuBar>
          <MenuItem $w={24} aria-label="Chart window">
            <svg width="16" height="16"><rect x="1.500" y="1.500" width="10" height="8" fill="#fff" stroke="#6aaede" /><path d="M1 2h11v2H1z" fill="#6aaede" /><rect x="4.500" y="5.500" width="10" height="9" fill="#fff" stroke="#6aaede" /><path d="M4 6h11v2H4z" fill="#6aaede" /><path d="M6 11l2 2 2-3 2 3" stroke="#3a7fc0" fill="none" /></svg>
          </MenuItem>
          {MENU.map(([name, w]) => <MenuItem key={name} $w={w}>{name}</MenuItem>)}
          <MdiButtons>
            <MdiButton aria-label="Minimize chart"><svg width="10" height="10"><path d="M2 7h6v2H2z" fill="#6c8296" /></svg></MdiButton>
            <MdiButton aria-label="Restore chart"><svg width="10" height="10"><path d="M3.500 3V1h5v5h-2M1.500 4h5v5h-5zM1 5h6" stroke="#6c8296" fill="none" strokeWidth="1.300" /></svg></MdiButton>
            <MdiButton aria-label="Close chart"><svg width="10" height="10"><path d="M2 2l6 6M8 2L2 8" stroke="#6c8296" strokeWidth="2" /></svg></MdiButton>
          </MdiButtons>
        </MenuBar>

        <Row>
          <Groups>
            <Group>
              <Grip />
              <Tool $w={36} aria-label="New chart">{icons.newChart}<Drop /></Tool>
              <Tool $w={37} aria-label="Profiles">{icons.profiles}<Drop /></Tool>
              <Divider />
              <Tool aria-label="Market watch">{icons.market}</Tool>
              <Tool aria-label="Data window">{icons.crosshair}</Tool>
              <Tool aria-label="Navigator">{icons.star}</Tool>
              <Tool aria-label="Terminal">{icons.navigator}</Tool>
              <Tool aria-label="Strategy tester">{icons.tester}</Tool>
              <Divider />
              <Tool $w={106}>{icons.order}Nowe Zlecenie</Tool>
              <Tool aria-label="MetaEditor">{icons.alert}</Tool>
              <Tool $w={114}>{icons.expert}Włącz strategie</Tool>
            </Group>
            <Group>
              <Grip />
              <Tool aria-label="Bar chart">{icons.bars}</Tool>
              <Tool $pressed aria-label="Candlesticks">{icons.candle}</Tool>
              <Tool aria-label="Line chart">{icons.line}</Tool>
              <Divider />
              <Tool aria-label="Zoom in">{icons.zoomIn}</Tool>
              <Tool aria-label="Zoom out">{icons.zoomOut}</Tool>
              <Divider />
              <Tool $pressed aria-label="Auto scroll">{icons.scroll}</Tool>
              <Tool $pressed aria-label="Chart shift">{icons.shift}</Tool>
              <Divider />
              <Tool $w={36} aria-label="Indicators">{icons.indicators}<Drop /></Tool>
              <Tool $w={37} aria-label="Periods">{icons.clock}<Drop /></Tool>
              <Tool $w={36} aria-label="Templates">{icons.template}<Drop /></Tool>
            </Group>
          </Groups>
          <ChatButton aria-label="4 messages">
            <svg width="18" height="18"><path d="M1 2h16v11h-8v4l-4-4H1z" fill="#5a78b4" /><text x="9" y="11" textAnchor="middle" fontFamily="Liberation Sans" fontWeight="700" fontSize="10" fill="#fff">4</text></svg>
          </ChatButton>
        </Row>

        <Row>
          <Groups>
            <Group>
              <Grip />
              <Tool $w={28} $pressed aria-label="Cursor">{icons.pointer}</Tool>
              <Tool aria-label="Crosshair">{icons.cross}</Tool>
              <Divider />
              <Tool aria-label="Vertical line">{icons.vline}</Tool>
              <Tool aria-label="Horizontal line">{icons.hline}</Tool>
              <Tool aria-label="Trend line">{icons.trend}</Tool>
              <Tool aria-label="Equidistant channel">{icons.channel}</Tool>
              <Tool aria-label="Fibonacci retracement">{icons.fibo}</Tool>
              <Tool aria-label="Text">{icons.text}</Tool>
              <Tool aria-label="Text label">{icons.label}</Tool>
              <Tool $w={34} aria-label="Arrows">{icons.arrows}<Drop /></Tool>
            </Group>
            <Group>
              <Grip />
              {PERIODS.map((p) => <Period key={p} $pressed={p === "M15"}>{p}</Period>)}
            </Group>
          </Groups>
        </Row>

        <ChartWindow>
          <Plot $h={486}><PriceChart /></Plot>
          <Scale $h={486}><PriceAxis /></Scale>
          <Plot $h={121}><Oscillator /></Plot>
          <Scale $h={121}><OscillatorAxis /></Scale>
          <TimeAxis>
            <Drawing role="img" aria-label="Time scale">
              <g transform="translate(-4 -709)">
                {TIMES.map((t, i) => (
                  <g key={t}>
                    <path d={`M${5.5 + i * 64} 708v3`} stroke="#000" />
                    <Label x={4 + i * 64} y={720}>{t}</Label>
                  </g>
                ))}
              </g>
            </Drawing>
          </TimeAxis>
        </ChartWindow>

        <Tabs>
          <Tab $w={88} $active>EURUSD,M15</Tab>
          {TABS.map(([name, w]) => <Tab key={name} $w={w}>{name}</Tab>)}
          <TabArrows>
            <ArrowButton aria-label="Scroll tabs left"><svg width="11" height="11"><path d="M7 2v8L3 6z" fill="#808080" /></svg></ArrowButton>
            <ArrowButton aria-label="Scroll tabs right"><svg width="11" height="11"><path d="M4 2v8l4-4z" fill="#808080" /></svg></ArrowButton>
          </TabArrows>
        </Tabs>

        <Status>
          <Cell $w={298}>Aby otworzyć okno pomocy, wciśnij F1</Cell>
          {STATUS.map(([text, w]) => <Cell key={text} $w={w}>{text}</Cell>)}
          <Cell>
            <svg width="24" height="14" aria-hidden="true">
              {Array.from({ length: 8 }, (_, i) => (
                <g key={i}>
                  <rect x={i * 3} y="1" width="2" height={10 - i} fill="#5e7d0e" />
                  <rect x={i * 3} y={12 - i} width="2" height={i + 1} fill="#a02010" />
                </g>
              ))}
            </svg>
            <Traffic>133/2 kb</Traffic>
            <svg width="12" height="14" aria-hidden="true"><path d="M1 14L12 3M5 14l7-7M9 14l3-3" stroke="#a0a0a0" strokeWidth="1.500" /></svg>
          </Cell>
        </Status>
      </Window>
    </>
  );
}
